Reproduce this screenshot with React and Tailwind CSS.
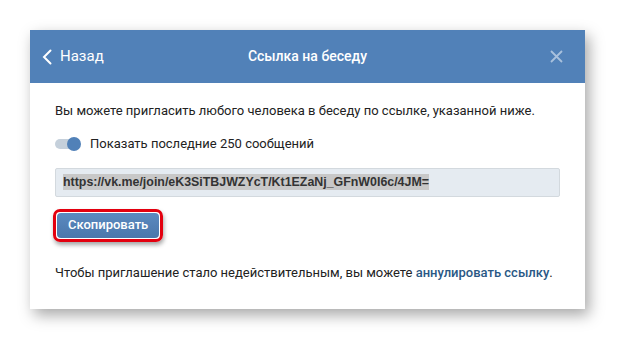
import React, { useState } from 'react';

export default function App() {
  const [on, setOn] = useState(true);
  const link = 'https://vk.me/join/eK3SiTBJWZYcT/Kt1EZaNj_GFnW0I6c/4JM=';

  return (
    <div className="w-[617px] h-[345px] bg-white pt-[30px] pl-[30px]" style={{ fontFamily: 'Roboto, "Open Sans", sans-serif' }}>
      <div className="w-[555px] bg-white shadow-[4px_6px_14px_rgba(0,0,0,0.35)]">
        <div className="h-[53px] bg-[#5181b8] flex items-center px-3 relative">
          <button className="flex items-center gap-2 text-white text-[15px]">
            <svg width="10" height="16" viewBox="0 0 10 16" fill="none">
              <path d="M8.5 1.5L2 8l6.5 6.5" stroke="#fff" strokeWidth="2" strokeLinecap="round" />
            </svg>
            <span>Назад</span>
          </button>
          <div className="absolute left-0 right-0 text-center text-white text-[14px] font-medium pointer-events-none">
            Ссылка на беседу
          </div>
          <svg className="ml-auto mr-[10px]" width="13" height="13" viewBox="0 0 13 13">
            <path d="M1 1l11 11M12 1L1 12" stroke="#a9c1dd" strokeWidth="1.8" />
          </svg>
        </div>
        <div className="px-[25px] pt-[19px] pb-[27px] text-[13px] text-[#222]">
          <p className="leading-[18px]">Вы можете пригласить любого человека в беседу по ссылке, указанной ниже.</p>
          <label className="flex items-center gap-[9px] mt-[14px] cursor-pointer" onClick={() => setOn(!on)}>
            <span className="relative w-[26px] h-[14px] flex items-center">
              <span className="absolute left-0 right-[2px] h-[10px] rounded-full bg-[#c5d0db]" />
              <span className={`absolute w-[14px] h-[14px] rounded-full bg-[#5181b8] ${on ? 'right-0' : 'left-0'}`} />
            </span>
            <span className="text-[#222]">Показать последние 250 сообщений</span>
          </label>
          <div className="mt-[14px] h-[29px] bg-[#e5ebf1] border border-[#d3d9de] rounded-[2px] flex items-center px-[7px]">
            <span className="bg-[#c8c8c8] text-[#333] font-bold text-[12.4px] leading-[16px]" style={{ fontFamily: '"Liberation Sans", Arial, sans-serif' }}>{link}</span>
          </div>
          <div className="mt-[12px] -ml-[2px] inline-block rounded-[7px] border-[3px] border-[#e3000f] p-[1px] shadow-[1px_3px_4px_rgba(0,0,0,0.35)]">
            <button className="block rounded-[4px] bg-gradient-to-b from-[#5b8ac0] to-[#4a77ab] text-white text-[13px] font-medium px-[11px] h-[25px]">
              Скопировать
            </button>
          </div>
          <p className="mt-[22px] leading-[18px]">
            Чтобы приглашение стало недействительным, вы можете <a className="text-[#2a5885] font-medium">аннулировать ссылку</a>.
          </p>
        </div>
      </div>
    </div>
  );
}
